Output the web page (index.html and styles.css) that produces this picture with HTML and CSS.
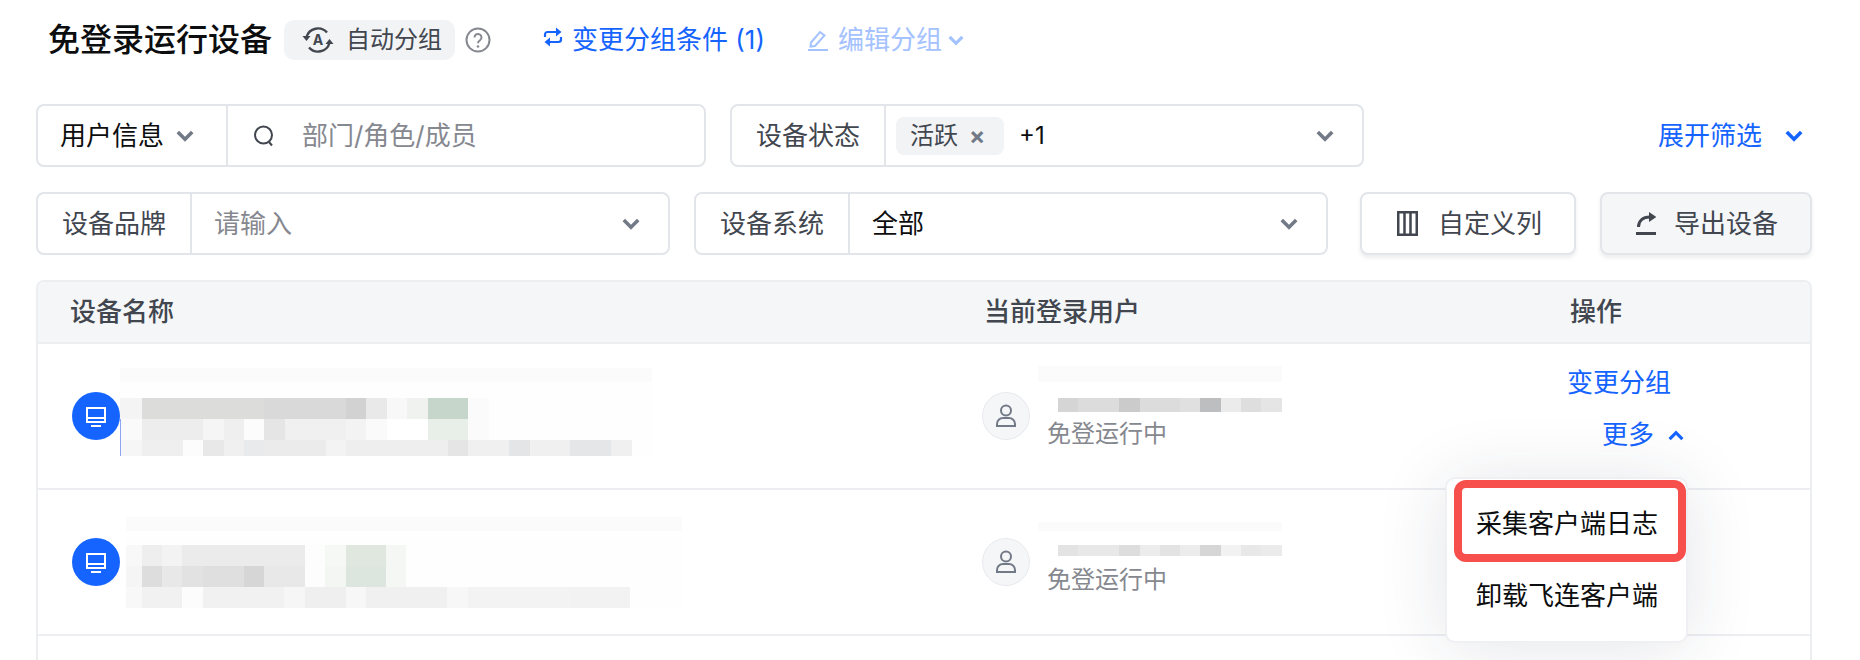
FILE: index.html
```html
<!DOCTYPE html>
<html lang="zh-CN">
<head>
    <meta charset="UTF-8">
    <meta name="viewport" content="width=device-width, initial-scale=1.0">
    <title>免登录运行设备</title>
    <link rel="stylesheet" href="styles.css">
</head>
<body>
    <svg class="defs" width="0" height="0">
        <symbol id="chev" viewBox="0 0 18 12"><path d="M1.800 2 9 9.200 16.200 2" fill="none" stroke="currentColor" stroke-width="3.600"/></symbol>
        <symbol id="device" viewBox="0 0 48 48">
            <circle cx="24" cy="24" r="24" fill="#1664ff"/>
            <path d="M15 16h18v14H15z" fill="none" stroke="#fff" stroke-width="2"/>
            <path d="M15 26h18M19 34h10" stroke="#fff" stroke-width="2"/>
        </symbol>
        <symbol id="person" viewBox="0 0 48 48">
            <circle cx="24" cy="24" r="23.500" fill="#f5f6f8" stroke="#e8e9ed"/>
            <circle cx="24" cy="18.500" r="5" fill="none" stroke="#737a87" stroke-width="2"/>
            <path d="M15 34v-2a6 6 0 0 1 6-6h6a6 6 0 0 1 6 6v2z" fill="none" stroke="#737a87" stroke-width="2"/>
        </symbol>
    </svg>

    <div class="page">
        <div class="title-row">
            <h1 class="title">免登录运行设备</h1>
            <span class="auto-tag">
                <svg class="auto-icon" viewBox="0 0 32 32">
                    <path d="M4.500 13A12 12 0 0 1 25 8.500M27.500 19A12 12 0 0 1 7 23.500" fill="none" stroke="currentColor" stroke-width="2.400"/>
                    <path d="M.5 12h8l-4 5zM23.500 20h8l-4-5z" fill="currentColor"/>
                    <text x="16" y="21" text-anchor="middle" class="auto-letter">A</text>
                </svg>
                自动分组
            </span>
            <svg class="help-icon" viewBox="0 0 26 26">
                <circle cx="13" cy="13" r="11.500" fill="none" stroke="currentColor" stroke-width="2"/>
                <path d="M9.500 10.500a3.500 3.500 0 1 1 5.500 2.800c-1.300.9-2 1.500-2 3" fill="none" stroke="currentColor" stroke-width="2"/>
                <circle cx="13" cy="19.500" r="1.300" fill="currentColor"/>
            </svg>
            <a class="link change-link">
                <svg class="loop-icon" viewBox="0 0 20 20">
                    <path d="M2 10V7.500A2.500 2.500 0 0 1 4.500 5H15M18 10v2.500a2.500 2.500 0 0 1-2.500 2.500H5" fill="none" stroke="currentColor" stroke-width="2.200"/>
                    <path d="M13 .5 18.500 5 13 9.500zM7 10.500 1.500 15 7 19.500z" fill="currentColor"/>
                </svg>
                变更分组条件 (1)
            </a>
            <a class="link edit-link">
                <svg class="pencil-icon" viewBox="0 0 20 22">
                    <path d="M3 13.500 12 3l4.500 3.500L7 17l-4.500 .5z" fill="none" stroke="currentColor" stroke-width="2"/>
                    <path d="M0 21h20" stroke="currentColor" stroke-width="2"/>
                </svg>
                编辑分组
                <svg class="chev-small"><use href="#chev"/></svg>
            </a>
        </div>

        <div class="filter-row first">
            <div class="field w670">
                <div class="field-label dark">用户信息<svg class="chev label-chev"><use href="#chev"/></svg></div>
                <div class="field-body">
                    <svg class="search-icon" viewBox="0 0 22 24">
                        <circle cx="10.500" cy="11" r="8.500" fill="none" stroke="currentColor" stroke-width="2"/>
                        <path d="M16 18l3 3.500" stroke="currentColor" stroke-width="2"/>
                    </svg>
                    <span class="placeholder">部门/角色/成员</span>
                </div>
            </div>
            <div class="field w634">
                <div class="field-label">设备状态</div>
                <div class="field-body tight">
                    <span class="chip">活跃<span class="chip-x">×</span></span>
                    <span class="plus">+1</span>
                    <svg class="chev end"><use href="#chev"/></svg>
                </div>
            </div>
            <a class="link expand">展开筛选<svg class="chev"><use href="#chev"/></svg></a>
        </div>

        <div class="filter-row second">
            <div class="field w634">
                <div class="field-label">设备品牌</div>
                <div class="field-body input-body">
                    <span class="placeholder">请输入</span>
                    <svg class="chev end"><use href="#chev"/></svg>
                </div>
            </div>
            <div class="field w634">
                <div class="field-label">设备系统</div>
                <div class="field-body input-body">
                    <span class="value">全部</span>
                    <svg class="chev end"><use href="#chev"/></svg>
                </div>
            </div>
            <button class="btn columns-btn">
                <svg class="columns-icon" viewBox="0 0 21 25">
                    <path d="M1.250 1.250h18.500v22.500H1.250zM7.500 1.250v22.500M13.500 1.250v22.500" fill="none" stroke="currentColor" stroke-width="2.500"/>
                </svg>
                自定义列
            </button>
            <button class="btn export-btn">
                <svg class="export-icon" viewBox="0 0 20 23">
                    <path d="M2.500 15c0-6 4-10 11.500-10" fill="none" stroke="currentColor" stroke-width="3"/>
                    <path d="M13 0l7.500 5L13 10z" fill="currentColor"/>
                    <path d="M0 21.500h20" stroke="currentColor" stroke-width="3"/>
                </svg>
                导出设备
            </button>
        </div>

        <div class="table">
            <div class="table-head">
                <div class="head-name">设备名称</div>
                <div class="head-user">当前登录用户</div>
                <div class="head-action">操作</div>
            </div>

            <div class="table-row">
                <div class="name-cell">
                    <svg class="device-icon"><use href="#device"/></svg>
                    <div class="mosaic mosaic-one">
                        <div class="m-band"></div>
                        <div class="m-a"></div>
                        <div class="m-b"></div>
                        <div class="m-c"></div>
                    </div>
                </div>
                <div class="user-cell">
                    <svg class="user-icon"><use href="#person"/></svg>
                    <div class="user-info info-one">
                        <div class="u-band"></div>
                        <div class="u-bar"></div>
                        <div class="status">免登运行中</div>
                    </div>
                </div>
                <div class="action-cell">
                    <a class="link row-link">变更分组</a>
                    <a class="link row-link more">更多<svg class="chev-up"><use href="#chev"/></svg></a>
                    <div class="menu">
                        <div class="menu-item marked">采集客户端日志</div>
                        <div class="menu-item">卸载飞连客户端</div>
                    </div>
                </div>
            </div>

            <div class="table-row">
                <div class="name-cell">
                    <svg class="device-icon"><use href="#device"/></svg>
                    <div class="mosaic mosaic-two">
                        <div class="m-band"></div>
                        <div class="m-a"></div>
                        <div class="m-b"></div>
                        <div class="m-c"></div>
                    </div>
                </div>
                <div class="user-cell">
                    <svg class="user-icon"><use href="#person"/></svg>
                    <div class="user-info info-two">
                        <div class="u-band"></div>
                        <div class="u-bar"></div>
                        <div class="status">免登运行中</div>
                    </div>
                </div>
                <div class="action-cell"></div>
            </div>
        </div>
    </div>
</body>
</html>
```

FILE: styles.css
```css
* {
    box-sizing: border-box;
}
html, body {
    height: 100%;
}
body {
    margin: 0;
    overflow: hidden;
    background-color: #fff;
    font-family: 'Inter', 'Noto Sans CJK SC', sans-serif;
    font-size: 26px;
    line-height: 36px;
    color: #0c0d0e;
}
.defs {
    position: absolute;
}
.page {
    width: 1812px;
    height: 660px;
    padding: 20px 0 0 36px;
}
.link {
    color: #1664ff;
    display: inline-flex;
    align-items: center;
}

/* title */
.title-row {
    display: flex;
    align-items: center;
    height: 40px;
}
.title {
    margin: 0 0 0 12px;
    font-size: 32px;
    font-weight: 500;
    line-height: 40px;
    white-space: nowrap;
}
.auto-tag {
    display: flex;
    align-items: center;
    width: 171px;
    height: 40px;
    margin-left: 12px;
    padding-left: 18px;
    border-radius: 10px;
    background-color: #f2f3f5;
    color: #41464f;
    font-size: 24px;
}
.auto-icon {
    width: 32px;
    height: 32px;
    margin-right: 12px;
}
.auto-letter {
    font-size: 14px;
    font-weight: 700;
    fill: currentColor;
}
.help-icon {
    width: 26px;
    height: 26px;
    margin-left: 10px;
    color: #86888f;
}
.change-link {
    margin-left: 52px;
    white-space: nowrap;
}
.loop-icon {
    width: 20px;
    height: 20px;
    margin-right: 9px;
    margin-top: -6px;
}
.edit-link {
    margin-left: 43px;
    color: #a4c2ff;
    white-space: nowrap;
}
.pencil-icon {
    width: 20px;
    height: 22px;
    margin-right: 10px;
}
.chev-small {
    width: 16px;
    height: 11px;
    margin-left: 6px;
}

/* filters */
.filter-row {
    display: flex;
    align-items: center;
    gap: 24px;
    height: 63px;
}
.filter-row.first {
    margin-top: 44px;
}
.filter-row.second {
    margin-top: 25px;
}
.field {
    display: flex;
    height: 63px;
    border: 2px solid #e2e5ea;
    border-radius: 8px;
}
.w670 {
    width: 670px;
}
.w634 {
    width: 634px;
}
.field-label {
    flex: none;
    display: flex;
    align-items: center;
    justify-content: center;
    width: 154px;
    border-right: 2px solid #e2e5ea;
    color: #41464f;
}
.field-label.dark {
    width: 190px;
    justify-content: flex-start;
    padding-left: 22px;
    color: #0c0d0e;
}
.label-chev {
    margin-left: 12px;
}
.field-body {
    flex: 1;
    display: flex;
    align-items: center;
    padding-left: 25px;
}
.field-body.tight {
    padding-left: 10px;
}
.input-body {
    padding-left: 22px;
}
.chev {
    flex: none;
    width: 18px;
    height: 12px;
    color: #737a87;
}
.chev.end {
    margin-left: auto;
    margin-right: 28px;
}
.search-icon {
    width: 22px;
    height: 24px;
    margin-right: 27px;
    color: #41464f;
}
.placeholder {
    color: #86888f;
}
.value, .plus {
    color: #0c0d0e;
}
.chip {
    display: flex;
    align-items: center;
    width: 108px;
    height: 38px;
    padding-left: 14px;
    border-radius: 8px;
    background-color: #f2f3f5;
    color: #41464f;
    font-size: 24px;
}
.chip-x {
    margin-left: 11px;
    color: #737a87;
    font-weight: 700;
}
.plus {
    margin-left: 15px;
    font-size: 24px;
}
.expand {
    margin-left: auto;
    margin-right: 9px;
}
.expand .chev {
    margin-left: 23px;
    color: #1664ff;
}

.btn {
    display: flex;
    align-items: center;
    height: 63px;
    padding: 0;
    border: 2px solid #e2e5ea;
    border-radius: 8px;
    background-color: #fff;
    box-shadow: 0 3px 4px rgba(0, 0, 0, 0.07);
    color: #41464f;
    font-family: inherit;
    font-size: 26px;
    line-height: 36px;
}
.columns-btn {
    width: 216px;
    margin-left: 8px;
    padding-left: 35px;
}
.export-btn {
    width: 212px;
    padding-left: 34px;
    background-color: #f5f6f8;
}
.columns-icon {
    width: 21px;
    height: 25px;
    margin-right: 20px;
}
.export-icon {
    width: 20px;
    height: 23px;
    margin-right: 18px;
}

/* table */
.table {
    width: 1776px;
    height: 380px;
    margin-top: 25px;
    border: 2px solid #eceef2;
    border-bottom: none;
    border-radius: 8px 8px 0 0;
}
.table-head, .table-row {
    display: grid;
    grid-template-columns: 944px 586px 1fr;
}
.table-head {
    height: 62px;
    align-items: center;
    background-color: #f5f6f8;
    border-bottom: 2px solid #eceef2;
    border-radius: 6px 6px 0 0;
    color: #41464f;
    font-weight: 500;
}
.head-name {
    padding-left: 32px;
}
.head-user, .head-action {
    padding-left: 2px;
}
.table-row {
    height: 146px;
    border-bottom: 2px solid #eceef2;
}
.name-cell {
    display: flex;
    align-items: center;
    padding-left: 34px;
}
.device-icon {
    flex: none;
    width: 48px;
    height: 48px;
}

/* blurred-out names */
.mosaic {
    background-color: #fefefe;
    filter: blur(0.5px);
}
.mosaic-one {
    width: 532px;
    margin-bottom: 8px;
}
.mosaic-two {
    width: 556px;
    margin-left: 6px;
}
.m-band {
    height: 14px;
    background-color: #fbfbfb;
}
.m-a, .m-b, .m-c {
    height: 21px;
}
.m-a {
    margin-top: 16px;
}
.mosaic-two .m-a {
    margin-top: 14px;
}
.m-c {
    height: 16px;
}
.mosaic-two .m-c {
    height: 21px;
}
.mosaic-one .m-a {
    background: linear-gradient(90deg, #f4f4f4 22px, #dcdcdb 22px 144px, #d9d9d9 144px 226px, #d2d2d2 226px 246px, #e9e9e9 246px 267px, #f7f8f7 267px 287px, #eff2ef 287px 308px, #c6d6ca 308px 348px, #fbfbfb 348px 369px, #fefefe 369px);
}
.mosaic-one .m-b {
    background: linear-gradient(90deg, #8ea4f4 1px, #fafafa 1px 22px, #ededed 22px 83px, #f5f5f5 83px 104px, #efefef 104px 124px, #fcfcfc 124px 144px, #e5e5e5 144px 165px, #f0f0f0 165px 226px, #f3f3f3 226px 246px, #fafafa 246px 267px, #fff 267px 308px, #e8efe9 308px 348px, #fafbfa 348px 369px, #fefefe 369px);
}
.mosaic-one .m-c {
    background: linear-gradient(90deg, #8ea4f4 1px, #f6f6f6 1px 22px, #efefef 22px 63px, #fcfcfc 63px 83px, #e8e8e8 83px 104px, #f0f0f0 104px 124px, #e9eaec 124px 144px, #ebebeb 144px 206px, #f3f3f3 206px 226px, #eee 226px 328px, #e5e5e5 328px 348px, #f0f0f0 348px 389px, #e4e5e7 389px 410px, #f0f0f0 410px 450px, #e5e6e8 450px 491px, #f0f0f0 491px 512px, #fefefe 512px);
}
.mosaic-two .m-a {
    background: linear-gradient(90deg, #f8f8f8 16px, #eee 16px 36px, #f3f3f3 36px 56px, #ebebeb 56px 179px, #fdfdfd 179px 199px, #f6f8f6 199px 220px, #dfe7df 220px 260px, #f5f7f5 260px 280px, #fefefe 280px);
}
.mosaic-two .m-b {
    background: linear-gradient(90deg, #f5f5f5 16px, #dcdddc 16px 36px, #e8e8e8 36px 56px, #e2e2e2 56px 77px, #dfdfdf 77px 118px, #d6d6d6 118px 138px, #e8e8e8 138px 179px, #fdfdfd 179px 199px, #f4f6f4 199px 220px, #dde6de 220px 260px, #f5f7f5 260px 280px, #fefefe 280px);
}
.mosaic-two .m-c {
    background: linear-gradient(90deg, #f8f8f8 16px, #f1f1f1 16px 56px, #fcfcfc 56px 77px, #f1f1f1 77px 158px, #f6f6f6 158px 179px, #efefef 179px 220px, #f7f7f7 220px 240px, #f0f0f0 240px 321px, #f6f7f6 321px 342px, #f3f3f3 342px 444px, #f1f2f1 444px 504px, #fefefe 504px);
}

/* user column */
.user-cell {
    display: flex;
    align-items: center;
}
.user-icon {
    flex: none;
    width: 48px;
    height: 48px;
}
.user-info {
    align-self: flex-start;
    width: 244px;
    margin-left: 8px;
}
.info-one {
    padding-top: 22px;
}
.info-two {
    padding-top: 32px;
}
.u-band {
    background-color: #fbfbfb;
}
.info-one .u-band {
    height: 16px;
    margin-bottom: 16px;
}
.info-two .u-band {
    height: 9px;
    margin-bottom: 14px;
}
.u-bar {
    margin-left: 20px;
    filter: blur(0.5px);
}
.info-one .u-bar {
    height: 14px;
    background: linear-gradient(90deg, #d5d5d5 20px, #dcdcdc 20px 61px, #cbcbcb 61px 82px, #dcdcdc 82px 122px, #e0e0e0 122px 142px, #bdbec0 142px 163px, #ebebeb 163px 183px, #dedede 183px 203px, #e5e5e5 203px);
}
.info-two .u-bar {
    height: 11px;
    background: linear-gradient(90deg, #e3e3e3 20px, #e8e8e8 20px 61px, #ddd 61px 82px, #ececec 82px 102px, #e3e3e3 102px 122px, #ececec 122px 142px, #d6d6d6 142px 163px, #f2f2f2 163px 183px, #e8e8e8 183px 203px, #ebebeb 203px);
}
.status {
    margin: 7px 0 0 9px;
    color: #86888f;
    font-size: 24px;
    line-height: 30px;
}
.info-two .status {
    margin-top: 9px;
}

/* actions */
.action-cell {
    position: relative;
    padding-top: 21px;
}
.row-link {
    display: flex;
    height: 36px;
    margin-left: -1px;
}
.more {
    margin: 16px 0 0 34px;
}
.chev-up {
    width: 16px;
    height: 11px;
    margin-left: 14px;
    transform: rotate(180deg);
}
.menu {
    position: absolute;
    top: 133px;
    left: -123px;
    width: 243px;
    height: 166px;
    padding: 1px 0 0 7px;
    border: 2px solid #eff0f3;
    border-radius: 10px;
    background-color: #fff;
    box-shadow: 0 4px 70px rgba(30, 40, 70, 0.12);
}
.menu-item {
    display: flex;
    align-items: center;
    height: 68px;
    padding-left: 22px;
    white-space: nowrap;
}
.menu-item.marked {
    width: 232px;
    height: 82px;
    padding: 6px 0 0 14px;
    border: 8px solid #f74f4b;
    border-radius: 12px;
}
```
